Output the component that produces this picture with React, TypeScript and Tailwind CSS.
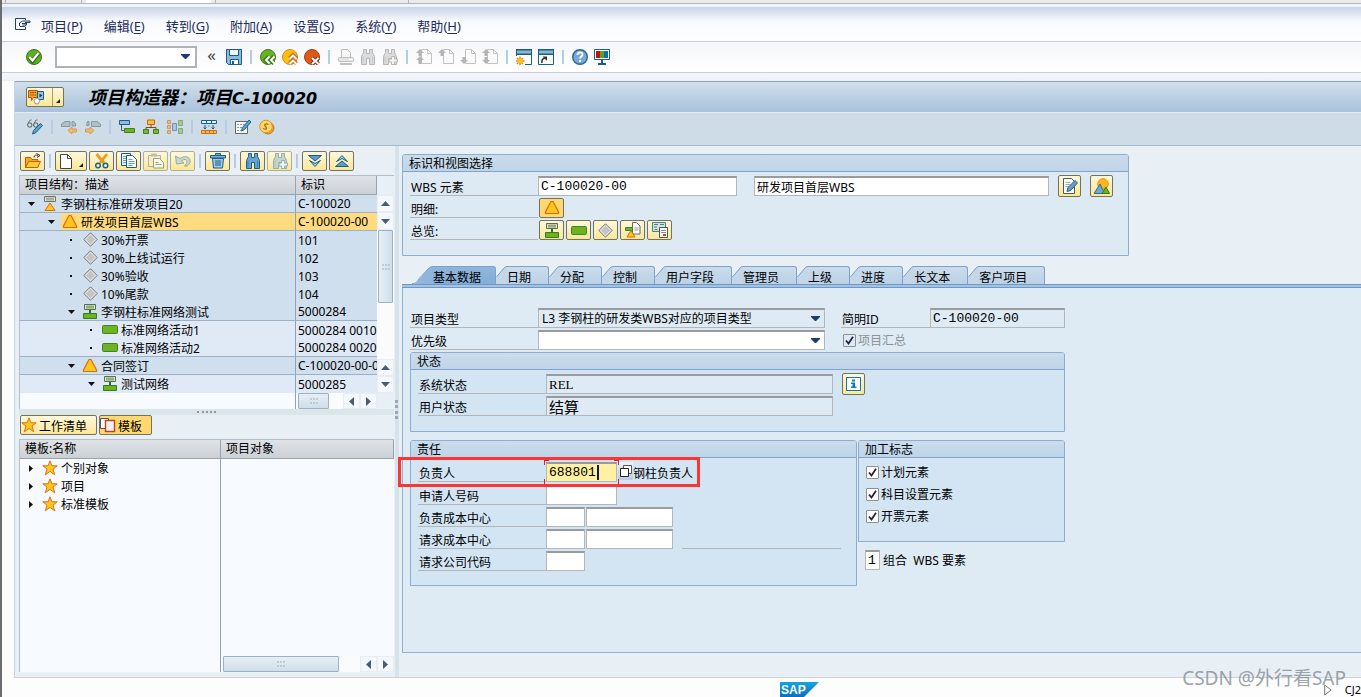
import React, { useState } from "react";

type Kids = { children?: React.ReactNode };

/* ---------- icons ---------- */

function Icon({ children, w = 16, h = 16, faded = false }: Kids & { w?: number; h?: number; faded?: boolean }) {
  return (
    <svg
      width={w}
      height={h}
      viewBox={`0 0 ${w} ${h}`}
      fill="none"
      aria-hidden="true"
      className={faded ? "block shrink-0 opacity-50" : "block shrink-0"}
    >
      {children}
    </svg>
  );
}

const DownCaret = () => (
  <Icon w={9} h={5}>
    <path d="M0 0h9v1L5 5H4L0 1z" fill="#1f3a73" />
  </Icon>
);

const MenuIcon = () => (
  <Icon w={16} h={13}>
    <path d="M10.500 9v2.500H.5V.5h10v1.500" stroke="#2a3f66" />
    <path d="M4.500 8V5l3-2h7.500v1.500H10M5 8.500h4.500l2-1.500V5M7 5.500h4M7.500 7h3.500" stroke="#2a3f66" />
  </Icon>
);

const OkIcon = () => (
  <Icon>
    <circle cx="8" cy="8" r="7.500" fill="#5fae1e" stroke="#35761c" />
    <path d="M3.500 8.500l3 3.500 6-7.500" stroke="#2d6a18" strokeWidth="4" />
    <path d="M3.500 8l3 3.500 6-7.500" stroke="#fff" strokeWidth="2.200" />
  </Icon>
);

const SaveIcon = () => (
  <Icon>
    <path d="M.5.5h15v15h-13l-2-2z" fill="#8fb8dc" stroke="#0f5f91" />
    <path d="M3.500.5h9v6h-9z" fill="#f3f8fc" stroke="#0f5f91" />
    <path d="M4.500 10.500h8v5h-8z" fill="#fff" stroke="#0f5f91" />
    <path d="M6 12h2v3H6z" fill="#0f5f91" />
  </Icon>
);

const BackIcon = () => (
  <Icon>
    <circle cx="8" cy="8" r="7.500" fill="#6bb022" stroke="#3d7d20" />
    <path d="M9 7.500L5.500 11 9 14.500M14 7.500L10.500 11l3.500 3.500" stroke="#3d7d20" strokeWidth="4" />
    <path d="M9.500 7.500L6 11l3.500 3.500M14.500 7.500L11 11l3.500 3.500" stroke="#fff" strokeWidth="1.800" />
  </Icon>
);

const ExitIcon = () => (
  <Icon>
    <circle cx="8" cy="8" r="7.500" fill="#fdc010" stroke="#d98a12" />
    <path d="M7.500 9.500L11 6l3.500 3.500M7.500 14.500L11 11l3.500 3.500" stroke="#d2691e" strokeWidth="4" />
    <path d="M7.500 10L11 6.500l3.500 3.500M7.500 15l3.500-3.500 3.500 3.500" stroke="#fff" strokeWidth="1.800" />
  </Icon>
);

const CancelIcon = () => (
  <Icon>
    <circle cx="8" cy="8" r="7.500" fill="#da5a1b" stroke="#a83d12" />
    <path d="M8 9l6.500 6M14.500 9L8 15" stroke="#8f2a12" strokeWidth="4" />
    <path d="M8 9l6.500 6M14.500 9L8 15" stroke="#fff" strokeWidth="2" />
  </Icon>
);

const PrintIcon = () => (
  <Icon>
    <path d="M3.500 8V.5h6l3 3V8" fill="#f7f7f7" stroke="#bdbdbd" />
    <rect x=".5" y="8.500" width="15" height="4" rx="1" fill="#e6e6e6" stroke="#bdbdbd" />
    <path d="M11 10h3v1h-3z" fill="#fff" />
    <path d="M2 14h12v2H2z" fill="#c2c2c2" />
  </Icon>
);

const Binoculars = ({ a, b, plus = false }: { a: string; b: string; plus?: boolean }) => (
  <Icon>
    <path d="M3.500.5h3v4h3v-4h3v3l2 4v8h-5v-6h-3v6h-5v-8l2-4z" fill={a} stroke={b} />
    <path d="M3 7.500v7M12.500 7.500v7" stroke={b} opacity=".5" />
    {plus && <path d="M9.500 7.500h3v2.500h3v3h-3v2.500h-3V13H7v-3h2.500z" fill="#f4f4f0" stroke={b} />}
  </Icon>
);

const PageIcon = ({ up, down, lower }: { up?: boolean; down?: boolean; lower?: boolean }) => (
  <Icon>
    <path d="M5.500.5h6l4 4v10h-10z" fill="#fafafa" stroke="#c2c2c2" />
    <path d="M11.500.5v4h4" stroke="#c2c2c2" />
    {up && <path d="M4 0l4 4H5.500v3h-3V4H0z" fill="#b4b4b4" />}
    {down && <path d="M4 15l-4-4h2.500V8h3v3H8z" fill="#b4b4b4" />}
    {lower && <path d="M4 7l4 4H5.500v4h-3v-4H0z" fill="#b4b4b4" />}
  </Icon>
);

const SessionIcon = ({ link = false }: { link?: boolean }) => (
  <Icon>
    <path d="M.5 1h15v14.500H.5z" fill="#fff" stroke="#155f8d" />
    <path d="M0 0h16v6H0z" fill="#155f8d" />
    <path d="M1 1.500h14v3H1z" fill="#8db6d6" />
    {link ? (
      <g>
        <path d="M4 14c-.5-3 .5-4.500 3-5" stroke="#333" strokeWidth="1.600" />
        <path d="M4.500 7.500H9V12z" fill="#333" />
      </g>
    ) : (
      <g>
        <path d="M0 7h9v9H0z" fill="#fff" />
        <path d="M4 7.500v8.500M0 12h8.500M1 9l6 6M7 9l-6 6" stroke="#e2821c" strokeWidth="1.500" />
        <circle cx="4" cy="12" r="2.600" fill="#ffc412" />
      </g>
    )}
  </Icon>
);

const HelpIcon = () => (
  <Icon>
    <circle cx="8" cy="8" r="7.300" fill="#78a9d4" stroke="#2b648f" strokeWidth="1.400" />
    <path d="M5.500 6c0-3.500 5-3.500 5-.5 0 2-2.500 2-2.500 4" stroke="#fff" strokeWidth="1.800" />
    <path d="M7 11h2v2H7z" fill="#fff" />
  </Icon>
);

const MonitorIcon = () => (
  <Icon>
    <path d="M.5.500h15v10H.5z" fill="#fff" stroke="#155f8d" />
    <path d="M2 2h4v7H2z" fill="#c80f0f" />
    <path d="M6 2h4v7H6z" fill="#54a81c" />
    <path d="M10 2h4v7h-4z" fill="#1769b0" />
    <path d="M7 11h2v3H7zM4 14h8v2H4z" fill="#155f8d" />
  </Icon>
);

const TitleIcon = () => (
  <Icon w={17} h={15}>
    <path d="M.5.5h9v7h-4l-2 3v-3h-3z" fill="#f9a51a" stroke="#b8511b" />
    <path d="M2 2.500h1.500M4.300 2.500h1.500M6.600 2.500h1.500M2 5h1.500M4.300 5h1.500M6.600 5h1.500" stroke="#8c3c12" />
    <path d="M9.500 1.500h6v8h-6z" fill="#9cc4e2" stroke="#155f8d" />
    <path d="M11.500 3.500v4l3-2z" fill="#0b4468" />
    <path d="M6 10l3-2 3 2.500-2 3.500-3-.5z" fill="#fff" stroke="#999" />
  </Icon>
);

const CornerMark = () => (
  <Icon w={4} h={4}>
    <path d="M4 0v4H0z" fill="#1a1a1a" />
  </Icon>
);

const GlassesPen = () => (
  <Icon>
    <circle cx="2.800" cy="6" r="2.200" stroke="#555" />
    <circle cx="8.800" cy="6" r="2.200" stroke="#555" />
    <path d="M1 4.500L3 1h1.500M7 4.500L9 1h1.500" stroke="#777" />
    <path d="M5.500 15l1-3.500 7-7L15.500 6.500l-7 7.500z" fill="#5fa0d0" stroke="#1f6391" />
  </Icon>
);

const ArrowPair = ({ right = false }: { right?: boolean }) => (
  <Icon>
    <path d={right ? "M6.500 2.500h5.500L15.500 5v2.500h-9z" : "M.5 5L4 2.500h5v5H.5z"} fill="#b4bec4" stroke="#7f99aa" />
    <path d={right ? "M2.500 2.500H4v4H1.500z" : "M11 2.500h2L14.500 5v2H11z"} fill="#b4bec4" stroke="#7f99aa" />
    {right ? (
      <path d="M9 11.500L5 8v2H.5v3H5v2z" fill="#f2ba6c" stroke="#d89a51" />
    ) : (
      <path d="M7 11.500L11 8v2h4.500v3H11v2z" fill="#f2ba6c" stroke="#d89a51" />
    )}
  </Icon>
);

const BarsIcon = () => (
  <Icon>
    <path d="M.5 1.500h10v4H.5z" fill="#8fb9e0" stroke="#155f8d" />
    <path d="M2.500 6v5.500H5" stroke="#555" />
    <path d="M5.500 9.500h10v4h-10z" fill="#6fb31f" stroke="#3f7f22" />
  </Icon>
);

const HierarchyIcon = () => (
  <Icon>
    <path d="M8 5v4M3 12V8.500h10V12" stroke="#7a4a1a" />
    <path d="M4.500 1h7v4.500h-7z" fill="#fdc32e" stroke="#cf5f18" />
    <path d="M.5 10.500h5v4H.5zM10.500 10.500h5v4h-5z" fill="#7cb92d" stroke="#3f7f22" />
  </Icon>
);

const BlocksIcon = () => (
  <Icon>
    <path d="M.5 1.500h3v3h-3zM.5 6.500h3v3h-3zM.5 11.500h3v3h-3z" fill="#edbd82" stroke="#cd9565" />
    <path d="M5.500 4.500h4v7h-4z" fill="#a8c5db" stroke="#6d97b8" />
    <path d="M11.500 1.500h4v5h-4zM11.500 9.500h4v5h-4z" fill="#a9c59a" stroke="#86a77a" />
  </Icon>
);

const GanttIcon = () => (
  <Icon>
    <path d="M.5 1.500h15v3H.5z" fill="#e8f2fa" stroke="#155f8d" />
    <path d="M5.500 1v4M10.500 1v4" stroke="#155f8d" />
    <path d="M4 6v4M12 6v4M2.500 8.500L4 10l1.500-1.500M10.500 8.500L12 10l1.500-1.500M7.500 7h1" stroke="#155f8d" />
    <path d="M.5 11.500h15v3H.5z" fill="#fbbf3a" stroke="#cf6a18" />
    <path d="M4.500 11v4M8.500 11v4M12.500 11v4" stroke="#cf6a18" />
  </Icon>
);

const CalcPen = () => (
  <Icon>
    <path d="M.5 2.500h12v12H.5z" fill="#f4f6f8" stroke="#666" />
    <path d="M2 5.500h9M2 8.500h6M2 11.500h6" stroke="#8a9aa8" strokeDasharray="2 1" />
    <path d="M6.500 12l1-3.500 6.500-7.500 2 2-6.500 7.500z" fill="#5fa0d0" stroke="#1f6391" />
  </Icon>
);

const CoinIcon = () => (
  <Icon>
    <circle cx="9" cy="9" r="6" fill="#eaa33c" stroke="#c9781f" />
    <circle cx="7" cy="7.500" r="6.300" fill="#fdd766" stroke="#e09127" />
    <path d="M9.500 5.500c-3-1.500-5 0-3 2s1 3.500-2.500 2" stroke="#a8651a" strokeWidth="1.300" />
  </Icon>
);

const FolderIcon = () => (
  <Icon>
    <path d="M.5 14.500v-10h5l1.500 2h6v8z" fill="#f9a51a" stroke="#c25d18" />
    <path d="M.5 14.500l3-6h12l-3 6z" fill="#ffcb2f" stroke="#c25d18" />
    <path d="M9 4.500C9 2 11 1.500 13 2.500M11.500.5l3.500 2-3 2" stroke="#333" />
  </Icon>
);

const NewDoc = () => (
  <Icon w={12} h={15}>
    <path d="M.5.5h7l4 4v10H.5z" fill="#fff" stroke="#444" />
    <path d="M7.500.5v4h4" stroke="#444" />
  </Icon>
);

const CutIcon = () => (
  <Icon>
    <path d="M2.500 1L10 10M13 1L6 10" stroke="#f09a1c" strokeWidth="2.800" />
    <circle cx="4" cy="12.500" r="2.300" stroke="#17669a" strokeWidth="1.500" />
    <circle cx="11.500" cy="12.500" r="2.300" stroke="#17669a" strokeWidth="1.500" />
  </Icon>
);

const CopyIcon = () => (
  <Icon>
    <path d="M.5.5h9v12h-9z" fill="#eef5fa" stroke="#155f8d" />
    <path d="M2 3.500h3M2 5.500h3M2 7.500h3M2 9.500h3" stroke="#5c9bc7" />
    <path d="M5.500 2.500h6l4 4v8h-10z" fill="#fff" stroke="#155f8d" />
    <path d="M7.500 6.500h4M7.500 8.500h6M7.500 10.500h6M7.500 12.500h4" stroke="#5c9bc7" />
  </Icon>
);

const PasteIcon = () => (
  <Icon faded>
    <path d="M.5 2.500h12v11H.5z" fill="#f7edc4" stroke="#777" />
    <path d="M3 .500h6v3H3z" fill="#888" />
    <path d="M5.500 5.500h6l4 4v5.500h-10z" fill="#fff" stroke="#155f8d" />
    <path d="M7.500 9.500h3M7.500 11.500h6" stroke="#155f8d" />
  </Icon>
);

const UndoIcon = () => (
  <Icon faded>
    <path d="M.5 3l1 8 7.500-1-2.500-2c3.500-3 6.500-1 5 2.500l-2 2.500h3c6-5 1-13-7.500-7.500z" fill="#9cc0d8" stroke="#2d6d95" />
  </Icon>
);

const TrashIcon = () => (
  <Icon>
    <path d="M2.500 5.500h11l-1 9.500h-9z" fill="#a7c9e2" stroke="#155f8d" />
    <path d="M.5 2.500h15v2.500H.5zM5.500 2V.5h5V2" fill="#7fb0d6" stroke="#155f8d" />
    <path d="M6 7v6M8 7v6M10 7v6" stroke="#155f8d" />
  </Icon>
);

const Chevrons = ({ up = false }: { up?: boolean }) => (
  <Icon>
    <g transform={up ? "rotate(180 8 8)" : undefined}>
      <path d="M1.500 2.500h13L8 8z" fill="#5e9aca" stroke="#155f8d" />
      <path d="M2.500 7.500L8 13.500l5.500-6-5.500 3z" fill="#a9cbe4" stroke="#155f8d" />
    </g>
  </Icon>
);

const Triangle = () => (
  <Icon w={16}>
    <path d="M7 1.500h2l5.500 10.500v1.500H1.500V12z" fill="#fec71b" stroke="#dd6a12" strokeWidth="1.200" />
  </Icon>
);

const ProjectIcon = () => (
  <Icon w={14} h={15}>
    <path d="M1.500.5h11v5h-11z" fill="#e0e4d8" stroke="#6f7565" />
    <path d="M3 2.200h8M3 3.900h8" stroke="#8b9180" />
    <path d="M7 7l5 7.500H2z" fill="#fec71b" stroke="#dd6a12" />
  </Icon>
);

const Diamond = () => (
  <Icon w={15} h={15}>
    <path d="M7.500.8l6.700 6.700-6.700 6.700L.8 7.500z" fill="#c4c4c4" stroke="#777" />
    <path d="M7.500 2.200l5.300 5.300-5.300 5.300-5.300-5.300z" stroke="#eee" />
  </Icon>
);

const NetworkIcon = () => (
  <Icon w={14} h={15}>
    <path d="M1.500.5h11v5h-11z" fill="#dfe8cf" stroke="#55704a" />
    <path d="M3 2.200h8M3 3.900h8" stroke="#6f8762" />
    <path d="M7 6v3" stroke="#2f6e20" strokeWidth="2" />
    <path d="M.5 9.500h13v5H.5z" fill="#6fb31f" stroke="#2f7d28" />
  </Icon>
);

const ActivityIcon = () => (
  <Icon w={16} h={9}>
    <rect x=".5" y=".5" width="15" height="8" rx="1" fill="#6fb31f" stroke="#3a8336" />
  </Icon>
);

const StarIcon = () => (
  <Icon w={16}>
    <path d="M8 .8l1.900 5h5.300l-4.200 3.300 1.700 5.700L8 11.400l-4.700 3.400L5 9.100.8 5.800h5.300z" fill="#ffc71c" stroke="#d8711a" />
  </Icon>
);

const TemplateIcon = () => (
  <Icon w={16}>
    <path d="M.5 1.500h8v10h-8z" fill="#fff" stroke="#555" />
    <path d="M5.500 3.500h9v11h-9z" fill="#f1f1f1" stroke="#c2401a" strokeWidth="1.400" />
  </Icon>
);

const TriPage = () => (
  <Icon>
    <path d="M7.500.5h4l3.500 3.500v8H7.500z" fill="#fff" stroke="#666" />
    <path d="M9.500 6h4M9.500 8h4" stroke="#999" />
    <path d="M.5 5.500h7v3h-7z" fill="#6fb31f" stroke="#3a8336" />
    <path d="M6 8.500l4 6.500H2z" fill="#fec71b" stroke="#dd6a12" />
  </Icon>
);

const DocsIcon = () => (
  <Icon>
    <path d="M.5.5h13v9H.5z" fill="#d3e4df" stroke="#4e7f8d" />
    <path d="M2 2.500h4M2 5h3M2.500 7.500h3M8 2.500h4" stroke="#4e7f8d" />
    <path d="M7.500 5.500h8v10h-8z" fill="#fff" stroke="#555" />
    <path d="M9 8.500h5M9 10.500h5" stroke="#888" />
    <path d="M11 12h3v2h-3z" fill="#d23a1a" />
  </Icon>
);

const PagePen = () => (
  <Icon>
    <path d="M1.500.5h8l3 3v12h-11z" fill="#fff" stroke="#555" />
    <path d="M3.500 4.500h5M3.500 6.500h5M3.500 8.500h3" stroke="#aaa" />
    <path d="M5 13.500l1-4 7-7L15.500 5l-7 7.500z" fill="#5fa0d0" stroke="#1f6391" />
  </Icon>
);

const LandscapeIcon = () => (
  <Icon>
    <circle cx="9" cy="6" r="5.300" fill="#fcb51b" stroke="#e8941a" />
    <path d="M0 15.500L6 6l4.500 9.500z" fill="#6fa8cf" stroke="#2c6f9d" />
    <path d="M8 15.500L12 9l3.500 6.500z" fill="#6fb31f" stroke="#35761c" />
  </Icon>
);

const InfoIcon = () => (
  <Icon w={15} h={14}>
    <path d="M.5.500h14v13H.5z" fill="#fff" stroke="#1573ad" />
    <path d="M6 2.500h3v2H6zM5 5.500h4v4h1.500v1.500H5V9.500h1.500V7H5z" fill="#0b7dbf" />
  </Icon>
);

/* ---------- shared controls ---------- */

const Sep = ({ tight = false }: { tight?: boolean }) => (
  <span className={tight ? "h-[14px] w-[2px] bg-[#b5cde4]" : "mx-[2px] h-[14px] w-[2px] bg-[#b5cde4]"} />
);

const Plain = ({ label, children }: Kids & { label: string }) => (
  <button type="button" aria-label={label} className="flex shrink-0 items-center justify-center">
    {children}
  </button>
);

const yellow =
  "flex shrink-0 items-center rounded-[2px] border border-[#77725f] bg-linear-to-b from-[#fdf8dc] to-[#fbe795]";

function Yellow({ label, children, size = "h-[20px] w-[25px]", faded = false }: Kids & { label: string; size?: string; faded?: boolean }) {
  return (
    <button type="button" aria-label={label} className={`${yellow} justify-center ${size} ${faded ? "border-[#b3ae98]" : ""}`}>
      {children}
    </button>
  );
}

function Field({ id, w, value = "", look = "bg-white", mono = true, label, readOnly }: {
  id?: string; w: string; value?: string; look?: string; mono?: boolean; label?: string; readOnly?: boolean;
}) {
  return (
    <input
      id={id}
      aria-label={label}
      defaultValue={value}
      readOnly={readOnly}
      className={`h-[20px] min-w-0 border border-t-2 border-[#b4b6b8] border-t-[#999b9e] pl-[2px] leading-4 outline-none ${
        mono ? "font-['Liberation_Mono','Noto_Sans_CJK_SC',monospace] text-[13px]" : "text-[12px]"
      } ${look} ${w}`}
    />
  );
}

const Label = ({ htmlFor, children, w = "w-[128px]" }: Kids & { htmlFor?: string; w?: string }) => (
  <label htmlFor={htmlFor} className={`block h-[20px] shrink-0 border-b border-[#b3b5b7] pt-[2px] pl-px leading-[19px] ${w}`}>
    {children}
  </label>
);

function Select({ id, options, look }: { id: string; options: string[]; look: string }) {
  return (
    <div className={`grid h-[20px] w-[287px] items-center border border-t-2 border-[#b4b6b8] border-t-[#999b9e] ${look}`}>
      <select id={id} className="col-start-1 row-start-1 h-[17px] w-full appearance-none bg-transparent pl-[3px] leading-4 outline-none">
        {options.map((o) => (
          <option key={o}>{o}</option>
        ))}
      </select>
      <span className="pointer-events-none col-start-1 row-start-1 mr-[4px] justify-self-end">
        <DownCaret />
      </span>
    </div>
  );
}

function Check({ label, disabled = false }: { label: string; disabled?: boolean }) {
  return (
    <label className={`flex h-[20px] items-center gap-[2px] leading-4 ${disabled ? "text-[#8b9297]" : ""}`}>
      <span className="grid place-items-center">
        <input
          type="checkbox"
          defaultChecked
          disabled={disabled}
          className={`peer col-start-1 row-start-1 size-[13px] appearance-none rounded-[1px] border border-[#8f8f8f] ${
            disabled ? "bg-[#dfebf4]" : "bg-white"
          }`}
        />
        <svg width="9" height="9" viewBox="0 0 9 9" fill="none" aria-hidden="true" className="pointer-events-none invisible col-start-1 row-start-1 peer-checked:visible">
          <path d="M1 4.500L3.500 7.500 8 .800" stroke="#23233f" strokeWidth="1.800" />
        </svg>
      </span>
      <span className="pt-[2px]">{label}</span>
    </label>
  );
}

function Box({ title, children, size, fill = "bg-[#d3e5f3]" }: Kids & { title: string; size: string; fill?: string }) {
  return (
    <section className={`rounded-t-[3px] border border-[#8eaed0] ${fill} ${size}`}>
      <h2 className="h-[17px] rounded-t-[2px] border-b border-[#82a3cb] bg-linear-to-b from-[#cbdcec] to-[#bed5e9] pl-[6px] leading-[17px]">
        {title}
      </h2>
      <div className="flex flex-col gap-[2px] pt-[4px] pl-[7px]">{children}</div>
    </section>
  );
}

/* ---------- scroll bars ---------- */

const ScrollArrow = ({ d, size }: { d: string; size: string }) => (
  <span className={`flex shrink-0 items-center justify-center border border-[#e6edf4] bg-[#f4f8fc] ${size}`}>
    <Icon w={9} h={9}>
      <path d={d} fill="#465d70" />
    </Icon>
  </span>
);
const UP = "M0 7l4.500-5L9 7z";
const DOWN = "M0 2h9L4.500 7z";
const LEFT = "M7 0v9L2 4.500z";
const RIGHT = "M2 0v9l5-4.500z";

const Grip = () => (
  <Icon w={8} h={6}>
    <path d="M0 1h2M3 1h2M6 1h2M0 5h2M3 5h2M6 5h2" stroke="#a3b2bf" />
  </Icon>
);

function HScroll({ thumb }: { thumb: string }) {
  return (
    <div className="flex h-[16px] bg-[#fafbfc]">
      <span className={`flex items-center justify-center rounded-[1px] border border-[#9fb1c1] bg-linear-to-b from-[#e6eff7] to-[#cfdeea] ${thumb}`}>
        <Grip />
      </span>
      <span className="flex-1" />
      <ScrollArrow d={LEFT} size="w-[17px]" />
      <ScrollArrow d={RIGHT} size="w-[17px]" />
    </div>
  );
}

/* ---------- project tree ---------- */

type Node = { lvl: number; mark: "open" | "leaf"; icon: React.ReactNode; name: string; id: string; tone: string; line?: boolean };

const dark = "bg-[#d0dfee]";
const light = "bg-[#e0eaf7]";
const indent = ["pl-[1px]", "pl-[21px]", "pl-[41px]", "pl-[61px]"];

const nodes: Node[] = [
  { lvl: 0, mark: "open", icon: <ProjectIcon />, name: "李钢柱标准研发项目20", id: "C-100020", tone: dark, line: true },
  { lvl: 1, mark: "open", icon: <Triangle />, name: "研发项目首层WBS", id: "C-100020-00", tone: "sel", line: true },
  { lvl: 2, mark: "leaf", icon: <Diamond />, name: "30%开票", id: "101", tone: dark },
  { lvl: 2, mark: "leaf", icon: <Diamond />, name: "30%上线试运行", id: "102", tone: dark },
  { lvl: 2, mark: "leaf", icon: <Diamond />, name: "30%验收", id: "103", tone: dark },
  { lvl: 2, mark: "leaf", icon: <Diamond />, name: "10%尾款", id: "104", tone: dark },
  { lvl: 2, mark: "open", icon: <NetworkIcon />, name: "李钢柱标准网络测试", id: "5000284", tone: dark, line: true },
  { lvl: 3, mark: "leaf", icon: <ActivityIcon />, name: "标准网络活动1", id: "5000284 0010", tone: light },
  { lvl: 3, mark: "leaf", icon: <ActivityIcon />, name: "标准网络活动2", id: "5000284 0020", tone: light, line: true },
  { lvl: 2, mark: "open", icon: <Triangle />, name: "合同签订", id: "C-100020-00-01", tone: dark, line: true },
  { lvl: 3, mark: "open", icon: <NetworkIcon />, name: "测试网络", id: "5000285", tone: light },
];

const head =
  "h-[19px] overflow-hidden border-r border-b border-[#96a3b0] bg-linear-to-b from-[#dfe3e6] to-[#cbd0d5] p-0 pl-[5px] text-left font-normal leading-[18px]";

function Tree() {
  return (
    <div className="flex border-t border-l border-[#b4c0cb]">
      <div className="w-[357px]">
        <table className="w-full table-fixed border-separate border-spacing-0">
          <colgroup>
            <col className="w-[276px]" />
            <col />
          </colgroup>
          <thead>
            <tr>
              <th className={head}>项目结构：描述</th>
              <th className={head}>标识</th>
            </tr>
          </thead>
          <tbody>
            {nodes.map((n) => {
              const edge = n.line ? "border-b border-b-[#9db0c6]" : "";
              const sel = n.tone === "sel";
              return (
                <tr key={n.name} className="leading-[17px]">
                  <td className={`h-[18px] border-r border-r-[#8fa3b8] p-0 align-top ${sel ? dark : n.tone} ${edge} ${indent[n.lvl]}`}>
                    <div className="flex h-[17px] items-center">
                      <span className="flex w-[20px] shrink-0 justify-center">
                        {n.mark === "open" ? (
                          <Icon w={7} h={4}>
                            <path d="M0 0h7L3.500 4z" fill="#111" />
                          </Icon>
                        ) : (
                          <span className="size-[2px] bg-[#111]" />
                        )}
                      </span>
                      <span className={`flex h-full min-w-0 flex-1 items-center ${sel ? "bg-[#ffdb7f]" : ""}`}>
                        <span className="flex w-[20px] shrink-0 justify-center pr-[2px]">{n.icon}</span>
                        <span className="pt-[2px] whitespace-nowrap">{n.name}</span>
                      </span>
                    </div>
                  </td>
                  <td className={`h-[18px] overflow-hidden p-0 pl-[2px] whitespace-nowrap ${sel ? "bg-[#ffdb7f]" : n.tone} ${edge}`}>{n.id}</td>
                </tr>
              );
            })}
          </tbody>
        </table>
        <div className="flex h-[16px] bg-[#f7faff]">
          <span className="w-[276px] border-r border-[#8fa3b8]" />
          <div className="flex-1 pl-[2px]">
            <HScroll thumb="w-[31px]" />
          </div>
        </div>
      </div>
      <div className="flex flex-1 flex-col bg-[#e8f0f7]">
        <span className="h-[19px]" />
        <ScrollArrow d={UP} size="h-[17px]" />
        <ScrollArrow d={DOWN} size="h-[18px]" />
        <div className="flex flex-1 flex-col bg-[#fafbfc]">
          <span className="mx-[1px] flex h-[73px] items-center justify-center rounded-[1px] border border-[#9fb1c1] bg-linear-to-r from-[#e6eff7] to-[#cfdeea]">
            <Grip />
          </span>
        </div>
        <ScrollArrow d={UP} size="h-[17px]" />
        <ScrollArrow d={DOWN} size="h-[17px]" />
        <span className="h-[16px]" />
      </div>
    </div>
  );
}

function Templates() {
  return (
    <div className="flex flex-1 flex-col border-t border-l border-[#b4c0cb] bg-[#f7faff]">
      <table className="w-full table-fixed border-separate border-spacing-0">
        <colgroup>
          <col className="w-[201px]" />
          <col />
        </colgroup>
        <thead>
          <tr>
            <th className={head}>模板:名称</th>
            <th className={head}>项目对象</th>
          </tr>
        </thead>
        <tbody>
          {["个别对象", "项目", "标准模板"].map((t) => (
            <tr key={t}>
              <td className="h-[18px] border-r border-[#8fa3b8] p-0 pl-[1px]">
                <div className="flex h-[18px] items-center leading-4">
                  <span className="flex w-[20px] justify-center">
                    <Icon w={4} h={7}>
                      <path d="M0 0v7l4-3.500z" fill="#111" />
                    </Icon>
                  </span>
                  <span className="flex w-[20px] justify-center pr-[2px]">
                    <StarIcon />
                  </span>
                  <span className="pt-[2px]">{t}</span>
                </div>
              </td>
              <td />
            </tr>
          ))}
        </tbody>
      </table>
      <div className="flex flex-1">
        <span className="w-[201px] border-r border-[#8fa3b8]" />
        <div className="flex flex-1 flex-col justify-end pl-[2px]">
          <HScroll thumb="w-[116px]" />
        </div>
      </div>
    </div>
  );
}

/* ---------- tab strip ---------- */

const tabs = ["基本数据", "日期", "分配", "控制", "用户字段", "管理员", "上级", "进度", "长文本", "客户项目"];

function TabStrip() {
  const [active, setActive] = useState(0);
  return (
    <div role="tablist" className="flex h-[18px] pl-[10px]">
      {tabs.map((t, i) => {
        const on = i === active;
        const first = i === 0;
        return (
          <button
            key={t}
            type="button"
            role="tab"
            aria-selected={on}
            onClick={() => setActive(i)}
            className="flex h-[18px] shrink-0"
          >
            <svg width={first ? 21 : 11} height="18" viewBox={first ? "0 0 21 18" : "0 0 11 18"} aria-hidden="true" className="block shrink-0">
              <path d={first ? "M0 18c4 0 5-2 8-6L17 2q2-2 4-2v18z" : "M0 18V11L8 2q1-2 3-2v18z"} fill={on ? "#8fb5dc" : "#c3d7e9"} />
              <path d={first ? "M0 17.500c4 0 5-2 8-6L17 2q2-1.500 4-1.500" : "M.5 11L8 2q1-1.500 3-1.500"} fill="none" stroke="#7ea3cb" />
            </svg>
            <span
              className={`h-full rounded-tr-[3px] border-t border-r border-[#7ea3cb] leading-[22px] ${first ? "pr-[14px]" : "pr-[17px]"} ${
                on ? "bg-linear-to-b from-[#8fb5dc] to-[#84add7]" : "bg-linear-to-b from-[#cbdceb] to-[#bad1e6]"
              }`}
            >
              {t}
            </span>
          </button>
        );
      })}
    </div>
  );
}

/* ---------- page ---------- */

const menus: [string, string][] = [
  ["项目", "P"], ["编辑", "E"], ["转到", "G"], ["附加", "A"], ["设置", "S"], ["系统", "Y"], ["帮助", "H"],
];

export default function App() {
  return (
    <div className="flex min-h-screen flex-col overflow-hidden border-l-2 border-[#6a6c70] bg-[#fdfdfd] font-['Noto_Sans','Noto_Sans_CJK_SC',sans-serif] text-[12px] text-black">
      <div className="flex h-[4px] border-b border-[#b5b5b5] bg-[#ebebeb]">
        <span className="ml-[3px] w-[77px] border-x border-[#b5b5b5]" />
        <span className="ml-[4px] w-[125px] bg-white" />
        <span className="ml-[4px] w-[194px] border-x border-[#b5b5b5]" />
      </div>

      <nav className="flex h-[38px] items-center gap-[21px] border-t-3 border-b border-t-[#eef4fb] border-b-[#c9ced6] bg-linear-to-b from-[#c6d3e6] via-[#f7f9fd] via-40% to-white pt-[4px] pl-[13px] text-[13px] text-[#1d2c5c]">
        <button type="button" aria-label="菜单" className="-mr-[11px] mb-[4px]">
          <MenuIcon />
        </button>
        {menus.map(([name, key]) => (
          <button key={key} type="button" className="leading-5">
            {name}(<u className="underline-offset-2">{key}</u>)
          </button>
        ))}
      </nav>

      <div className="flex h-[31px] items-center gap-[6px] border-b border-[#c9ced6] bg-linear-to-b from-[#f5f6f9] to-white pb-px pl-[24px]">
        <Plain label="回车"><OkIcon /></Plain>
        <div className="ml-[7px] flex h-[22px] w-[142px] items-center border-2 border-[#b0b2b6] bg-white pr-[5px]">
          <input aria-label="命令" className="w-full min-w-0 flex-1 outline-none" />
          <DownCaret />
        </div>
        <button type="button" className="mx-[2px] w-[13px] pb-[3px] text-[17px] leading-4 text-[#444]">«</button>
        <Plain label="保存"><SaveIcon /></Plain>
        <Sep />
        <Plain label="返回"><BackIcon /></Plain>
        <Plain label="退出"><ExitIcon /></Plain>
        <Plain label="取消"><CancelIcon /></Plain>
        <Sep />
        <Plain label="打印"><PrintIcon /></Plain>
        <Plain label="查找"><Binoculars a="#dcdcdc" b="#b5b5b5" /></Plain>
        <Plain label="继续查找"><Binoculars a="#dcdcdc" b="#b5b5b5" plus /></Plain>
        <Sep />
        <Plain label="首页"><PageIcon up lower /></Plain>
        <Plain label="上一页"><PageIcon up /></Plain>
        <Plain label="下一页"><PageIcon down /></Plain>
        <Plain label="末页"><PageIcon up down /></Plain>
        <Sep />
        <Plain label="新会话"><SessionIcon /></Plain>
        <Plain label="快捷方式"><SessionIcon link /></Plain>
        <Sep />
        <Plain label="帮助"><HelpIcon /></Plain>
        <Plain label="布局"><MonitorIcon /></Plain>
      </div>
      <div className="h-[8px] bg-linear-to-b from-[#f4f7fa] to-[#eef2f7]" />

      <main className="ml-[12px] flex flex-1 flex-col border-b border-l border-[#ccd3de] bg-[#e8f0f6]">
        <header className="flex h-[32px] items-center border-t border-b border-t-[#8fa2b5] border-b-[#e2ebf2] bg-linear-to-b from-[#d0dfeb] to-[#a9c1db] pl-[11px]">
          <button type="button" aria-label="服务" className={`${yellow} h-[20px] w-[38px] pl-px`}>
            <TitleIcon />
            <span className="mr-[3px] ml-[7px] h-full w-px bg-[#a39c77]" />
            <span className="mt-[8px]"><CornerMark /></span>
          </button>
          <h1 className="ml-6 font-['DejaVu_Sans','Noto_Sans_CJK_SC',sans-serif] text-[16px] leading-6 font-bold italic">
            <span className="font-['Noto_Sans_CJK_SC'] text-[18px] font-semibold">项目构造器：项目</span>C-100020
          </h1>
        </header>

        <div className="flex h-[33px] items-center gap-[8px] border-b border-[#a7b8ca] bg-[#cddce7] pb-[4px] pl-[12px]">
          <Plain label="显示/更改"><GlassesPen /></Plain>
          <Sep tight />
          <Plain label="上一个"><ArrowPair /></Plain>
          <Plain label="下一个"><ArrowPair right /></Plain>
          <Sep tight />
          <Plain label="计划板"><BarsIcon /></Plain>
          <Plain label="层次图"><HierarchyIcon /></Plain>
          <Plain label="网络图"><BlocksIcon /></Plain>
          <Sep tight />
          <Plain label="计划"><GanttIcon /></Plain>
          <Sep tight />
          <Plain label="编辑"><CalcPen /></Plain>
          <Plain label="成本"><CoinIcon /></Plain>
        </div>

        <div className="flex flex-1">
          <aside className="flex w-[380px] shrink-0 flex-col pr-px pb-[5px] pl-[4px]">
            <div className="flex items-center gap-[2px] pt-[5px] pb-[4px] pl-px">
              <Yellow label="打开"><FolderIcon /></Yellow>
              <Sep />
              <Yellow label="创建" size="h-[20px] w-[32px]">
                <NewDoc />
                <span className="mt-[8px] ml-[7px]"><CornerMark /></span>
              </Yellow>
              <Yellow label="剪切"><CutIcon /></Yellow>
              <Yellow label="复制"><CopyIcon /></Yellow>
              <Yellow label="粘贴" faded><PasteIcon /></Yellow>
              <Yellow label="撤销" faded><UndoIcon /></Yellow>
              <Sep />
              <Yellow label="删除"><TrashIcon /></Yellow>
              <Sep />
              <Yellow label="查找"><Binoculars a="#6ba3d0" b="#155f8d" /></Yellow>
              <Yellow label="继续查找" faded><Binoculars a="#c5d6cf" b="#93aeb4" plus /></Yellow>
              <Sep />
              <Yellow label="展开"><Chevrons /></Yellow>
              <Yellow label="折叠"><Chevrons up /></Yellow>
            </div>
            <Tree />
            <div className="flex h-[6px] items-center justify-center bg-[#dbe6eb]">
              <span className="w-[19px] border-t-2 border-dotted border-[#8c9aa6]" />
            </div>
            <div className="flex gap-[2px] pb-[4px] pl-px">
              <button type="button" className={`${yellow} h-[20px] w-[77px] gap-[2px] leading-4`}>
                <StarIcon />
                <span className="pt-[3px]">工作清单</span>
              </button>
              <button type="button" className="flex h-[20px] w-[53px] items-center gap-[2px] rounded-[2px] border border-[#77725f] bg-[#ffd970] leading-4">
                <TemplateIcon />
                <span className="pt-[3px]">模板</span>
              </button>
            </div>
            <Templates />
          </aside>

          <div className="flex w-[4px] shrink-0 flex-col bg-[#d7e3ea] pt-[254px]">
            <span className="h-[19px] w-0 border-l-3 border-dotted border-[#9aa8b3]" />
          </div>

          <div className="flex min-w-0 flex-1 flex-col pt-[8px] pl-[3px]">
            <Box title="标识和视图选择" size="h-[102px] w-full max-w-[727px]" fill="bg-[#dde9f3]">
              <div className="flex h-[20px] items-center">
                <Label htmlFor="wbs">WBS 元素</Label>
                <Field id="wbs" w="w-[199px]" value="C-100020-00" />
                <div className="mr-[9px] ml-[17px] flex"><Field label="描述" w="w-[295px]" value="研发项目首层WBS" mono={false} /></div>
                <Yellow label="长文本" size="h-[22px] w-[23px]"><PagePen /></Yellow>
                <span className="w-[9px]" />
                <Yellow label="图形" size="h-[22px] w-[23px]"><LandscapeIcon /></Yellow>
              </div>
              <div className="flex items-center gap-px">
                <Label>明细:</Label>
                <button type="button" aria-label="明细" className="flex h-[20px] w-[25px] items-center justify-center rounded-[2px] border border-[#77725f] bg-[#ffd970]">
                  <Triangle />
                </button>
              </div>
              <div className="flex items-center gap-px">
                <Label>总览:</Label>
                <div className="flex gap-[2px]">
                  <Yellow label="网络"><NetworkIcon /></Yellow>
                  <Yellow label="活动"><ActivityIcon /></Yellow>
                  <Yellow label="里程碑"><Diamond /></Yellow>
                  <Yellow label="凭证"><TriPage /></Yellow>
                  <Yellow label="文本"><DocsIcon /></Yellow>
                </div>
              </div>
            </Box>

            <div className="mt-[10px] flex flex-1 flex-col">
              <TabStrip />
              <div className="h-[4px] shrink-0 border-y border-[#6c98c6] bg-[#a5c3e1]" />
              <div role="tabpanel" className="mb-[24px] flex-1 border-b border-l border-[#8cb2d8] bg-[#deebf4] pt-5 pl-[7px]">
                <div className="flex max-w-[655px] gap-4">
                  <div className="flex flex-col gap-[2px]">
                    <div className="flex">
                      <Label htmlFor="type">项目类型</Label>
                      <Select id="type" options={["L3 李钢柱的研发类WBS对应的项目类型"]} look="bg-[#deebf4]" />
                    </div>
                    <div className="flex">
                      <Label htmlFor="prio">优先级</Label>
                      <Select id="prio" options={[""]} look="bg-white" />
                    </div>
                  </div>
                  <div className="flex flex-1 flex-col gap-[2px]">
                    <div className="flex">
                      <Label htmlFor="short" w="w-[89px]">简明ID</Label>
                      <Field id="short" w="w-full flex-1" value="C-100020-00" look="bg-[#deebf4]" readOnly />
                    </div>
                    <div className="pl-[2px]"><Check label="项目汇总" disabled /></div>
                  </div>
                </div>

                <div className="mt-[2px] flex max-w-[655px] flex-col gap-[8px]">
                  <Box title="状态" size="h-[80px]">
                    <div className="flex h-[20px] items-center">
                      <Label htmlFor="sys">系统状态</Label>
                      <Field id="sys" w="w-[287px]" value="REL" look="bg-[#deebf4] font-['Liberation_Serif']" readOnly />
                      <span className="w-[9px]" />
                      <Yellow label="信息" size="h-[22px] w-[23px]"><InfoIcon /></Yellow>
                    </div>
                    <div className="flex">
                      <Label htmlFor="usr">用户状态</Label>
                      <Field id="usr" w="w-[287px]" value="结算" look="bg-[#deebf4] text-[15px]" readOnly />
                    </div>
                  </Box>

                  <div className="flex gap-px">
                    <Box title="责任" size="h-[146px] w-[447px]">
                      <div className="relative flex">
                        <Label htmlFor="resp">负责人</Label>
                        <div className="relative flex h-[20px] w-[71px] items-center border border-t-2 border-[#b4b6b8] border-t-[#999b9e] bg-[#fff0a2] pl-[2px]">
                          <input
                            id="resp"
                            defaultValue="688801"
                            size={6}
                            className="w-[48px] font-['Liberation_Mono',monospace] text-[13px] leading-4 outline-none"
                          />
                          <span className="h-[15px] w-[2px] bg-[#0c1a4d]" />
                          <span className="pointer-events-none absolute -top-[4px] -left-[3px] h-[5px] w-[5px] border-t border-l border-[#e02020]" />
                          <span className="pointer-events-none absolute -top-[4px] -right-[3px] h-[5px] w-[5px] border-t border-r border-[#e02020]" />
                          <span className="pointer-events-none absolute -bottom-[3px] -left-[3px] h-[5px] w-px bg-[#e02020]" />
                          <span className="pointer-events-none absolute -right-[3px] -bottom-[3px] h-[5px] w-px bg-[#e02020]" />
                        </div>
                        <button type="button" aria-label="搜索帮助" className="ml-px flex h-[18px] w-[15px] items-center justify-center bg-linear-to-b from-[#eef3fa] to-[#b9cbe4]">
                          <Icon w={12} h={12}>
                            <path d="M3.500.5h8v8h-8z" fill="#fff" stroke="#555" />
                            <path d="M.5 3.500h8v8h-8z" fill="#fff" stroke="#222" />
                          </Icon>
                        </button>
                        <span className="pt-[2px] leading-[19px]">钢柱负责人</span>
                        <div className="pointer-events-none absolute -top-[5px] -left-[20px] h-[30px] w-[302px] border-3 border-[#fb3535]" />
                      </div>
                      <div className="flex">
                        <Label htmlFor="appl">申请人号码</Label>
                        <Field id="appl" w="w-[71px]" />
                      </div>
                      <div className="flex">
                        <Label htmlFor="cc1">负责成本中心</Label>
                        <Field id="cc1" w="w-[39px]" />
                        <span className="w-px" />
                        <Field label="负责成本中心编号" w="w-[87px]" />
                      </div>
                      <div className="flex">
                        <Label htmlFor="cc2">请求成本中心</Label>
                        <Field id="cc2" w="w-[39px]" />
                        <span className="w-px" />
                        <Field label="请求成本中心编号" w="w-[87px]" />
                        <span className="ml-[9px] w-[159px] border-b border-[#b3b5b7]" />
                      </div>
                      <div className="flex">
                        <Label htmlFor="co">请求公司代码</Label>
                        <Field id="co" w="w-[39px]" />
                      </div>
                    </Box>
                    <div className="flex flex-1 flex-col gap-[8px]">
                      <Box title="加工标志" size="h-[102px]">
                        <Check label="计划元素" />
                        <Check label="科目设置元素" />
                        <Check label="开票元素" />
                      </Box>
                      <div className="flex items-center gap-[3px] pl-[7px]">
                        <Field id="grp" w="w-[15px]" value="1" />
                        <label htmlFor="grp" className="pt-[2px] leading-[18px]">组合&nbsp; WBS 要素</label>
                      </div>
                    </div>
                  </div>
                </div>
              </div>
            </div>
          </div>
        </div>
      </main>

      <footer className="relative flex h-[19px] items-end pl-[778px]">
        <svg width="39" height="15" viewBox="0 0 39 15" role="img" aria-label="SAP" className="shrink-0">
          <defs>
            <linearGradient id="sap" x1="0" y1="0" x2="0" y2="1">
              <stop offset="0" stopColor="#14a3e2" />
              <stop offset="1" stopColor="#0a6fc0" />
            </linearGradient>
          </defs>
          <path d="M0 0h39L24 15H0z" fill="url(#sap)" />
          <text x="1" y="12" fontFamily="Liberation Sans" fontWeight="bold" fontSize="12" fill="#fff">SAP</text>
        </svg>
        <span className="ml-auto flex h-[13px] items-start gap-[13px] text-[11px] leading-3">
          <Icon w={8} h={12}>
            <path d="M.7 1v10l6.500-5z" fill="#fff" stroke="#777" />
          </Icon>
          CJ2
        </span>
        <p className="absolute right-[15px] bottom-[7px] text-[19px] leading-6 whitespace-nowrap text-[#8f979d]/90">CSDN @外行看SAP</p>
      </footer>
    </div>
  );
}
